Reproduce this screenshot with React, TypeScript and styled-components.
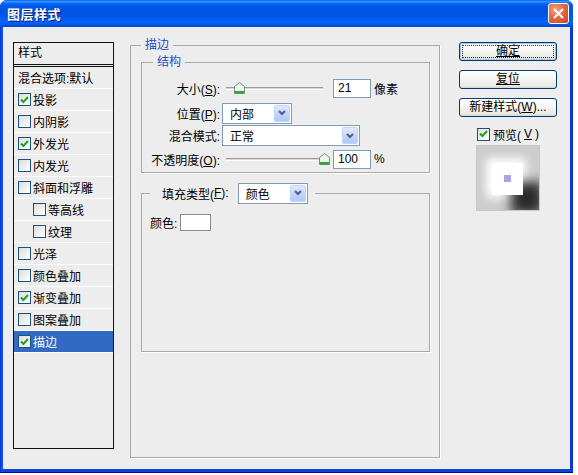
import styled, { createGlobalStyle } from 'styled-components'

const GlobalStyle = createGlobalStyle`
  html, body {
    margin: 0;
    padding: 0;
    background: #ffffff;
  }
  body {
    font-family: "Liberation Sans", "Noto Sans CJK SC", sans-serif;
    font-size: 12px;
    color: #000;
  }
`

const Window = styled.div`
  width: 573px;
  height: 473px;
  box-sizing: border-box;
  display: flex;
  flex-direction: column;
  padding: 0 3px 4px;
  border-radius: 7px 7px 0 0;
  background: linear-gradient(to right, #0831d9, #1655e8 2px, #0a44dc 4px, #0a44dc calc(100% - 4px), #0831d9);
  box-shadow: inset 0 -1px 0 #00138c;
`

const TitleBar = styled.div`
  height: 27px;
  margin: 0 -3px;
  padding: 0 4px 0 7px;
  display: flex;
  align-items: center;
  justify-content: space-between;
  border-radius: 7px 7px 0 0;
  background: linear-gradient(
    to bottom,
    #0058ee 0%,
    #3d95ff 5%,
    #167fff 9%,
    #0367f8 14%,
    #0057e5 22%,
    #0054e3 50%,
    #0058ee 66%,
    #0266fc 80%,
    #005ae8 90%,
    #0047c8 100%
  );
`

const Title = styled.span`
  color: #fff;
  font-family: "Noto Sans CJK SC", sans-serif;
  font-weight: 700;
  font-size: 13px;
  text-shadow: 1px 1px 0 #0a1a70;
  letter-spacing: 0.5px;
`

const CloseButton = styled.div`
  width: 21px;
  height: 21px;
  box-sizing: border-box;
  border: 1px solid #fff;
  border-radius: 3px;
  background: radial-gradient(circle at 35% 30%, #f3a484 0%, #e36a45 45%, #cc4216 100%);
  display: flex;
  align-items: center;
  justify-content: center;
`

const Body = styled.div`
  flex: 1;
  background: #ededed;
  display: flex;
  align-items: flex-start;
  padding: 10px 0 0 10px;
`

const StyleList = styled.div`
  width: 101px;
  height: 407px;
  margin-top: 5px;
  box-sizing: border-box;
  border: 1px solid #111;
  display: flex;
  flex-direction: column;
`

const ListHeader = styled.div`
  height: 21px;
  line-height: 21px;
  padding-left: 4px;
  border-bottom: 3px double #111;
`

const ListRow = styled.div<{ $indent: number; $selected?: boolean }>`
  height: 21px;
  flex-shrink: 0;
  display: flex;
  align-items: center;
  gap: 2px;
  padding-left: ${({ $indent }) => $indent}px;
  border-bottom: 1px solid #fdfdfd;
  background: ${({ $selected }) => ($selected ? '#316ac5' : 'transparent')};
  color: ${({ $selected }) => ($selected ? '#fff' : '#000')};
`

const Box = styled.span`
  width: 13px;
  height: 13px;
  box-sizing: border-box;
  flex-shrink: 0;
  border: 1px solid #1c5180;
  background: linear-gradient(135deg, #dcdcd7 0%, #f2f2ef 60%, #ffffff 100%);
  display: inline-flex;
  align-items: center;
  justify-content: center;
`

const Main = styled.div`
  margin-left: 16px;
`

const GroupBox = styled.fieldset<{ $height?: number; $padLeft: number; $padRight: number }>`
  margin: 0;
  min-width: 0;
  box-sizing: border-box;
  border: 1px solid #a9a9a9;
  box-shadow: 1px 1px 0 #ffffff;
  padding: 0 ${({ $padRight }) => $padRight}px 0 ${({ $padLeft }) => $padLeft}px;
  height: ${({ $height }) => ($height ? `${$height}px` : 'auto')};
`

const OuterGroup = styled(GroupBox)`
  width: 310px;
  padding-top: 1px;
`

const StructGroup = styled(GroupBox)`
  padding-top: 8px;
  padding-bottom: 3px;
  display: flex;
  flex-direction: column;
`

const FillGroup = styled(GroupBox)`
  margin-top: 9px;
  padding-top: 10px;
`

const Legend = styled.legend<{ $offset: number; $blue?: boolean }>`
  margin-left: ${({ $offset }) => $offset}px;
  padding: 0 4px;
  line-height: 16px;
  color: ${({ $blue }) => ($blue ? '#1c4fc8' : '#000')};
`

const FillLegend = styled.legend`
  padding: 0 7px 0 12px;
  display: flex;
  align-items: center;
  height: 22px;
`

const Row = styled.div<{ $height: number; $gap: number }>`
  height: ${({ $height }) => $height}px;
  margin-top: ${({ $gap }) => $gap}px;
  display: flex;
  align-items: center;
`

const Label = styled.span`
  width: 74px;
  flex-shrink: 0;
  text-align: right;
  white-space: nowrap;
`

const Slider = styled.div`
  position: relative;
  width: 102px;
  height: 20px;
  margin: 0 7px 0 4px;

  &::before {
    content: '';
    position: absolute;
    left: 2px;
    right: 3px;
    top: 9px;
    height: 1px;
    border-top: 1px solid #9c9c9c;
    border-bottom: 1px solid #ffffff;
    background: #d8d8d8;
  }
`

const Thumb = styled.svg<{ $left: number }>`
  position: absolute;
  top: 4px;
  left: ${({ $left }) => $left}px;
`

const NumberField = styled.div`
  width: 38px;
  height: 19px;
  box-sizing: border-box;
  border: 1px solid #7f9db9;
  background: #fff;
  padding-left: 4px;
  line-height: 17px;
`

const Unit = styled.span`
  margin-left: 3px;
`

const Combo = styled.div<{ $width: number; $gap: number }>`
  width: ${({ $width }) => $width}px;
  height: 21px;
  margin-left: ${({ $gap }) => $gap}px;
  box-sizing: border-box;
  border: 1px solid #7f9db9;
  background: #fff;
  display: flex;
  align-items: center;
  justify-content: space-between;
  padding: 0 1px 0 7px;
`

const ComboButton = styled.span`
  width: 16px;
  height: 17px;
  box-sizing: border-box;
  border: 1px solid #c3d3fd;
  border-radius: 2px;
  background: linear-gradient(to bottom, #e1eafe 0%, #c5d6fc 50%, #b4c8f6 100%);
  display: flex;
  align-items: center;
  justify-content: center;
`

const ColorRow = styled.div`
  display: flex;
  align-items: center;
  gap: 3px;
`

const Swatch = styled.span`
  width: 31px;
  height: 17px;
  box-sizing: border-box;
  border: 1px solid #8c8c8c;
  background: #fff;
`

const Side = styled.div`
  width: 98px;
  margin: 5px 0 0 19px;
  display: flex;
  flex-direction: column;
  align-items: center;
  gap: 9px;
`

const Button = styled.button<{ $primary?: boolean }>`
  position: relative;
  width: 98px;
  height: 19px;
  padding: 0;
  box-sizing: border-box;
  font: inherit;
  line-height: 15px;
  color: #000;
  border: 1px solid #003c74;
  border-radius: 3px;
  background: linear-gradient(to bottom, #ffffff 0%, #f6f6f3 45%, #ebeae4 85%, #d9d5cb 100%);
  box-shadow: ${({ $primary }) => ($primary ? 'inset 0 0 0 1px #a9c4ee' : 'none')};

  &::after {
    content: '';
    display: ${({ $primary }) => ($primary ? 'block' : 'none')};
    position: absolute;
    inset: 2px;
    border: 1px dotted #333;
  }
`

const PreviewToggle = styled.label`
  display: flex;
  align-items: center;
  gap: 3px;
  height: 14px;
  margin-top: 1px;
`

const PreviewFrame = styled.div`
  width: 64px;
  height: 66px;
  box-sizing: border-box;
  border: 1px solid #c6c6c6;
  margin-top: -5px;
  display: flex;
`

const Tick = () => (
  <svg width="9" height="8" viewBox="0 0 9 8">
    <path d="M1 3.5 L3.4 6 L8 1" fill="none" stroke="#21a121" strokeWidth="2" />
  </svg>
)

const CheckBox = ({ checked }: { checked?: boolean }) => (
  <Box>{checked && <Tick />}</Box>
)

const Chevron = () => (
  <svg width="8" height="6" viewBox="0 0 8 6">
    <path d="M1 1 L4 4 L7 1" fill="none" stroke="#4d6185" strokeWidth="2" />
  </svg>
)

const ThumbShape = ({ left }: { left: number }) => (
  <Thumb $left={left} width="11" height="12" viewBox="0 0 11 12">
    <path d="M0.5 4.5 L5.5 0.5 L10.5 4.5 L10.5 11.5 L0.5 11.5 Z" fill="#f1f4ee" stroke="#7b8b80" />
    <rect x="1" y="9" width="9" height="2.5" fill="#2fa83a" />
  </Thumb>
)

const Select = ({ value, width, gap }: { value: string; width: number; gap: number }) => (
  <Combo $width={width} $gap={gap}>
    <span>{value}</span>
    <ComboButton>
      <Chevron />
    </ComboButton>
  </Combo>
)

const effects: { name: string; checked: boolean; sub?: boolean }[] = [
  { name: '投影', checked: true },
  { name: '内阴影', checked: false },
  { name: '外发光', checked: true },
  { name: '内发光', checked: false },
  { name: '斜面和浮雕', checked: false },
  { name: '等高线', checked: false, sub: true },
  { name: '纹理', checked: false, sub: true },
  { name: '光泽', checked: false },
  { name: '颜色叠加', checked: false },
  { name: '渐变叠加', checked: true },
  { name: '图案叠加', checked: false },
  { name: '描边', checked: true },
]

// layer thumbnail: white square with outer glow, drop shadow and purple centre
const PreviewArt = () => (
  <svg width="62" height="64" viewBox="0 0 62 64">
    <defs>
      <filter id="glow" x="-50%" y="-50%" width="200%" height="200%">
        <feGaussianBlur stdDeviation="5" />
      </filter>
      <filter id="shade" x="-50%" y="-50%" width="200%" height="200%">
        <feGaussianBlur stdDeviation="6" />
      </filter>
    </defs>
    <rect width="62" height="64" fill="#cdcdcd" />
    <rect x="9" y="12" width="40" height="40" fill="#ffffff" filter="url(#glow)" />
    <rect x="34" y="36" width="32" height="32" fill="#2a2a2a" filter="url(#shade)" />
    <rect x="15" y="17" width="31" height="32" fill="#ffffff" />
    <rect x="27" y="29" width="7" height="7" fill="#aba3ea" />
  </svg>
)

export default function App() {
  return (
    <>
      <GlobalStyle />
      <Window>
        <TitleBar>
          <Title>图层样式</Title>
          <CloseButton>
            <svg width="11" height="11" viewBox="0 0 11 11">
              <path d="M1 1 L10 10 M10 1 L1 10" stroke="#fff" strokeWidth="2" />
            </svg>
          </CloseButton>
        </TitleBar>
        <Body>
          <StyleList>
            <ListHeader>样式</ListHeader>
            <ListRow $indent={4}>混合选项:默认</ListRow>
            {effects.map((fx) => (
              <ListRow key={fx.name} $indent={fx.sub ? 19 : 4} $selected={fx.name === '描边'}>
                <CheckBox checked={fx.checked} />
                {fx.name}
              </ListRow>
            ))}
          </StyleList>

          <Main>
            <OuterGroup $height={421} $padLeft={10} $padRight={9}>
              <Legend $offset={0} $blue>描边</Legend>
              <StructGroup $padLeft={4} $padRight={4}>
                <Legend $offset={7} $blue>结构</Legend>
                <Row $height={20} $gap={0}>
                  <Label>大小(<u>S</u>):</Label>
                  <Slider>
                    <ThumbShape left={10} />
                  </Slider>
                  <NumberField>21</NumberField>
                  <Unit>像素</Unit>
                </Row>
                <Row $height={22} $gap={4}>
                  <Label>位置(<u>P</u>):</Label>
                  <Select value="内部" width={70} gap={2} />
                </Row>
                <Row $height={21} $gap={1}>
                  <Label>混合模式:</Label>
                  <Select value="正常" width={138} gap={2} />
                </Row>
                <Row $height={20} $gap={3}>
                  <Label>不透明度(<u>O</u>):</Label>
                  <Slider>
                    <ThumbShape left={95} />
                  </Slider>
                  <NumberField>100</NumberField>
                  <Unit>%</Unit>
                </Row>
              </StructGroup>

              <FillGroup $height={170} $padLeft={8} $padRight={8}>
                <FillLegend>
                  填充类型(<u>F</u>):
                  <Select value="颜色" width={70} gap={9} />
                </FillLegend>
                <ColorRow>
                  颜色:
                  <Swatch />
                </ColorRow>
              </FillGroup>
            </OuterGroup>
          </Main>

          <Side>
            <Button $primary><u>确定</u></Button>
            <Button><u>复位</u></Button>
            <Button>新建样式(<u>W</u>)...</Button>
            <PreviewToggle>
              <CheckBox checked />
              预览(<u>V</u>)
            </PreviewToggle>
            <PreviewFrame>
              <PreviewArt />
            </PreviewFrame>
          </Side>
        </Body>
      </Window>
    </>
  )
}
